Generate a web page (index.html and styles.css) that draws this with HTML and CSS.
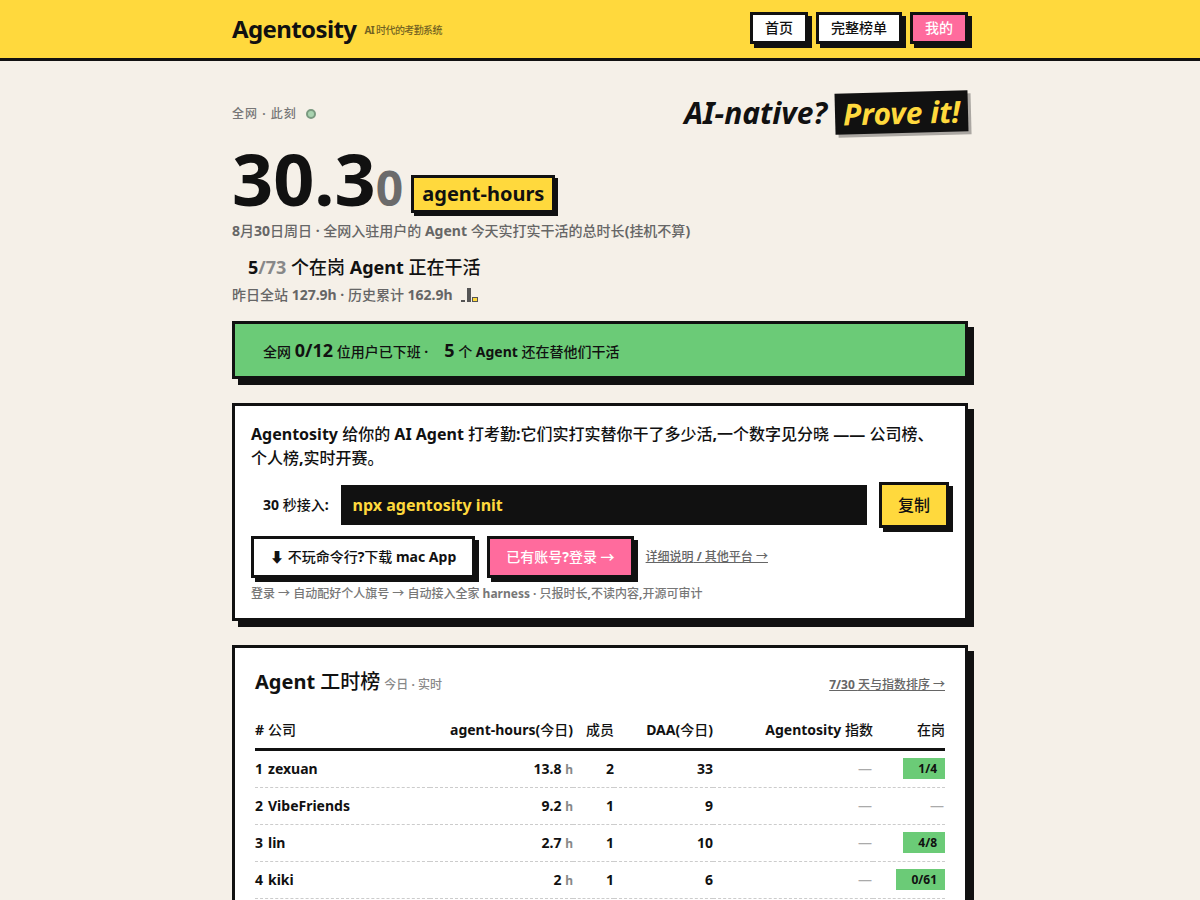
FILE: index.html
```html
<!DOCTYPE html>
<html lang="zh-CN">
<head>
  <meta charset="UTF-8" />
  <meta name="viewport" content="width=device-width, initial-scale=1.0"/>
  <title>Agentosity</title>
  <link rel="stylesheet" href="styles.css">
</head>
<body>
  <header class="topbar">
    <div class="topbar-inner">
      <div class="brand">
        <span class="brand-name">Agentosity</span>
        <span class="brand-sub">AI <span class="zh">时代的考勤系统</span></span>
      </div>
      <nav class="nav">
        <a class="nav-btn zh">首页</a>
        <a class="nav-btn zh">完整榜单</a>
        <a class="nav-btn pink zh">我的</a>
      </nav>
    </div>
  </header>

  <main class="container">
    <div class="hero-top">
      <div class="live"><span class="zh">全网</span> · <span class="zh">此刻</span> <span class="live-dot"></span></div>
      <div class="slogan">AI-native? <span class="prove">Prove it!</span></div>
    </div>

    <div class="counter">
      <span class="counter-num">30.3<span class="counter-tail">0</span></span>
      <span class="unit">agent-hours</span>
    </div>
    <p class="counter-note">8<span class="zh">月</span>30<span class="zh">日周日</span> · <span class="zh">全网入驻用户的</span> Agent <span class="zh">今天实打实干活的总时长</span>(<span class="zh">挂机不算</span>)</p>
    <p class="on-duty">5<span class="muted">/73</span> <span class="zh">个在岗</span> Agent <span class="zh">正在干活</span></p>
    <p class="history"><span class="zh">昨日全站</span> 127.9h · <span class="zh">历史累计</span> 162.9h
      <span class="spark">
        <i class="spark-low"></i>
        <i class="spark-high"></i>
        <i class="spark-now"></i>
      </span>
    </p>

    <section class="banner">
      <span><span class="zh">全网</span> <span class="big">0/12</span> <span class="zh">位用户已下班</span> ·</span>
      <span><span class="big">5</span> <span class="zh">个</span> Agent <span class="zh">还在替他们干活</span></span>
    </section>

    <section class="card intro">
      <p class="intro-text">Agentosity <span class="zh">给你的</span> AI Agent <span class="zh">打考勤</span>:<span class="zh">它们实打实替你干了多少活</span>,<span class="zh">一个数字见分晓</span> —— <span class="zh">公司榜、个人榜</span>,<span class="zh">实时开赛。</span></p>
      <div class="install">
        <span class="install-label">30 <span class="zh">秒接入</span>:</span>
        <code class="install-cmd">npx agentosity init</code>
        <button class="btn yellow zh">复制</button>
      </div>
      <div class="actions">
        <a class="btn white">⬇ <span class="zh">不玩命令行</span>?<span class="zh">下载</span> mac App</a>
        <a class="btn pink"><span class="zh">已有账号</span>?<span class="zh">登录 →</span></a>
        <a class="more-link"><span class="zh">详细说明</span> / <span class="zh">其他平台 →</span></a>
      </div>
      <p class="intro-note"><span class="zh">登录 → 自动配好个人旗号 → 自动接入全家</span> harness · <span class="zh">只报时长</span>,<span class="zh">不读内容</span>,<span class="zh">开源可审计</span></p>
    </section>

    <section class="card board">
      <div class="board-head">
        <h2><span>Agent <span class="zh">工时榜</span></span> <small><span class="zh">今日</span> · <span class="zh">实时</span></small></h2>
        <a class="board-link">7/30 <span class="zh">天与指数排序 →</span></a>
      </div>
      <table class="rank">
        <colgroup>
          <col class="c-name"><col class="c-hours"><col class="c-members"><col class="c-daa"><col class="c-index"><col class="c-duty">
        </colgroup>
        <thead>
          <tr>
            <th class="left"><span class="pos">#</span><span class="zh">公司</span></th>
            <th>agent-hours(<span class="zh">今日</span>)</th>
            <th class="zh">成员</th>
            <th>DAA(<span class="zh">今日</span>)</th>
            <th>Agentosity <span class="zh">指数</span></th>
            <th class="zh">在岗</th>
          </tr>
        </thead>
        <tbody>
          <tr><td class="left"><span class="pos">1</span>zexuan</td><td>13.8 <span class="h">h</span></td><td>2</td><td>33</td><td class="dash">—</td><td><span class="duty">1/4</span></td></tr>
          <tr><td class="left"><span class="pos">2</span>VibeFriends</td><td>9.2 <span class="h">h</span></td><td>1</td><td>9</td><td class="dash">—</td><td class="dash">—</td></tr>
          <tr><td class="left"><span class="pos">3</span>lin</td><td>2.7 <span class="h">h</span></td><td>1</td><td>10</td><td class="dash">—</td><td><span class="duty">4/8</span></td></tr>
          <tr><td class="left"><span class="pos">4</span>kiki</td><td>2 <span class="h">h</span></td><td>1</td><td>6</td><td class="dash">—</td><td><span class="duty">0/61</span></td></tr>
        </tbody>
      </table>
    </section>
  </main>
</body>
</html>
```

FILE: styles.css
```css
* {
  box-sizing: border-box;
}
body {
  margin: 0;
  background: #f5f0e8;
  color: #111;
  font-family: "Noto Sans", "Noto Sans CJK SC", sans-serif;
  font-size: 14px;
  font-weight: 700;
}
p {
  margin: 0;
}
.zh {
  font-weight: 500;
}
.topbar {
  background: #ffd93d;
  border-bottom: 3px solid #111;
  height: 61px;
}
.topbar-inner {
  width: 736px;
  margin: 0 auto;
  height: 58px;
  padding-bottom: 2px;
  display: flex;
  align-items: center;
  justify-content: space-between;
}
.brand {
  display: flex;
  align-items: center;
  gap: 8px;
  letter-spacing: -0.5px;
}
.brand-name {
  font-size: 24px;
  letter-spacing: -0.6px;
}
.brand-sub {
  margin-top: 2px;
  font-size: 10px;
  letter-spacing: -0.6px;
  opacity: 0.6;
}
.nav {
  display: flex;
  gap: 8px;
}
.nav-btn {
  display: block;
  height: 32px;
  padding: 0 12px;
  line-height: 26px;
  border: 3px solid #111;
  box-shadow: 4px 4px 0 #111;
  background: #fff;
}
.nav-btn.pink {
  background: #ff6b9d;
  color: #fff;
}
.container {
  width: 736px;
  margin: 0 auto;
  padding-top: 30px;
}
.hero-top {
  display: flex;
  justify-content: space-between;
  align-items: center;
}
.live {
  font-size: 12px;
  letter-spacing: 1px;
  color: #777;
}
.live-dot {
  display: inline-block;
  width: 10px;
  height: 10px;
  margin-left: 5px;
  border: 2px solid #7a9a80;
  border-radius: 50%;
  background: #a9d3b0;
  vertical-align: -1px;
}
.slogan {
  font-size: 30px;
  font-style: italic;
  line-height: 44px;
}
.prove {
  display: inline-block;
  padding: 0 8px;
  background: #111;
  color: #ffd93d;
  line-height: 41px;
  box-shadow: 3px 3px 0 rgba(0, 0, 0, 0.3);
  transform: rotate(-1.5deg);
}
.counter {
  display: flex;
  align-items: flex-start;
  gap: 8px;
  margin-top: 3px;
  height: 83px;
}
.counter-num {
  margin-top: -2px;
  font-size: 72px;
  line-height: 84px;
}
.counter-tail {
  font-size: 48px;
  color: #6b6b6b;
}
.unit {
  margin-top: 37px;
  padding: 0 8px;
  border: 3px solid #111;
  box-shadow: 3px 3px 0 #111;
  background: #ffd93d;
  font-size: 20px;
  line-height: 32px;
}
.counter-note {
  color: #666;
  line-height: 20px;
}
.on-duty {
  margin-top: 14px;
  padding-left: 16px;
  font-size: 18px;
  line-height: 24px;
}
.muted {
  color: #888;
}
.history {
  margin-top: 6px;
  color: #666;
  line-height: 20px;
}
.spark {
  display: inline-flex;
  align-items: flex-end;
  height: 15px;
  margin-left: 5px;
  vertical-align: -2px;
}
.spark i {
  display: block;
}
.spark-low {
  width: 4px;
  height: 2px;
  margin-right: 2px;
  background: #555;
}
.spark-high {
  width: 4px;
  height: 14px;
  margin-right: 1px;
  background: #555;
}
.spark-now {
  width: 6px;
  height: 5px;
  background: #ffd93d;
  border: 1px solid #555;
}
.banner {
  margin-top: 16px;
  height: 58px;
  padding-left: 28px;
  display: flex;
  align-items: center;
  gap: 16px;
  background: #6bcb77;
  border: 3px solid #111;
  box-shadow: 6px 6px 0 #111;
}
.big {
  font-size: 18px;
}
.card {
  background: #fff;
  border: 3px solid #111;
  box-shadow: 6px 6px 0 #111;
}
.intro {
  margin-top: 24px;
  padding: 16px 16px 15px;
}
.intro-text {
  font-size: 16px;
  line-height: 24px;
}
.install {
  display: flex;
  align-items: center;
  gap: 12px;
  margin-top: 12px;
  padding-left: 12px;
}
.install-label {
  margin-top: -2px;
}
.install-cmd {
  flex: 1;
  height: 40px;
  padding: 0 12px;
  background: #111;
  color: #ffd93d;
  font-family: inherit;
  font-size: 16px;
  line-height: 40px;
}
.btn {
  display: inline-block;
  padding: 0 16px;
  border: 3px solid #111;
  box-shadow: 4px 4px 0 #111;
  font-family: inherit;
}
.btn.yellow {
  width: 70px;
  height: 46px;
  padding: 0 0 2px;
  background: #ffd93d;
  color: #111;
  font-size: 16px;
}
.btn.white {
  background: #fff;
}
.btn.pink {
  background: #ff6b9d;
  color: #fff;
}
.actions {
  display: flex;
  align-items: center;
  gap: 12px;
  margin-top: 8px;
}
.actions .btn {
  height: 42px;
  line-height: 36px;
}
.more-link {
  margin-top: -2px;
  font-size: 12px;
  color: #666;
  text-decoration: underline;
}
.intro-note {
  margin-top: 7px;
  font-size: 12px;
  line-height: 18px;
  color: #777;
}
.board {
  margin-top: 24px;
  padding: 16px 20px 24px;
}
.board-head {
  display: flex;
  justify-content: space-between;
  align-items: center;
  height: 32px;
}
.board-head h2 {
  display: flex;
  align-items: baseline;
  gap: 4px;
  margin: 0;
  font-size: 20px;
}
.board-head small {
  font-size: 12px;
  color: #888;
}
.board-link {
  margin-top: 8px;
  font-size: 12px;
  color: #666;
  text-decoration: underline;
}
.rank {
  width: 100%;
  margin-top: 15px;
  table-layout: fixed;
  border-collapse: separate;
  border-spacing: 0;
}
.c-name { width: 175px; }
.c-hours { width: 143px; }
.c-members { width: 41px; }
.c-daa { width: 99px; }
.c-index { width: 160px; }
.c-duty { width: 72px; }
.rank th {
  height: 40px;
  padding: 0 0 2px;
  border-bottom: 3px solid #111;
  text-align: right;
  white-space: nowrap;
}
.rank td {
  height: 37px;
  padding: 0 0 2px;
  border-bottom: 1px dashed #ccc;
  text-align: right;
  white-space: nowrap;
}
.rank .left {
  text-align: left;
}
.pos {
  display: inline-block;
  width: 13px;
}
.rank .h {
  font-size: 12px;
  color: #888;
}
.rank .dash {
  padding-right: 1px;
  font-weight: 400;
  color: #aaa;
}
.duty {
  display: inline-block;
  padding: 2px 8px 2px 15px;
  background: #6bcb77;
  font-size: 12px;
  line-height: 17px;
}
```
